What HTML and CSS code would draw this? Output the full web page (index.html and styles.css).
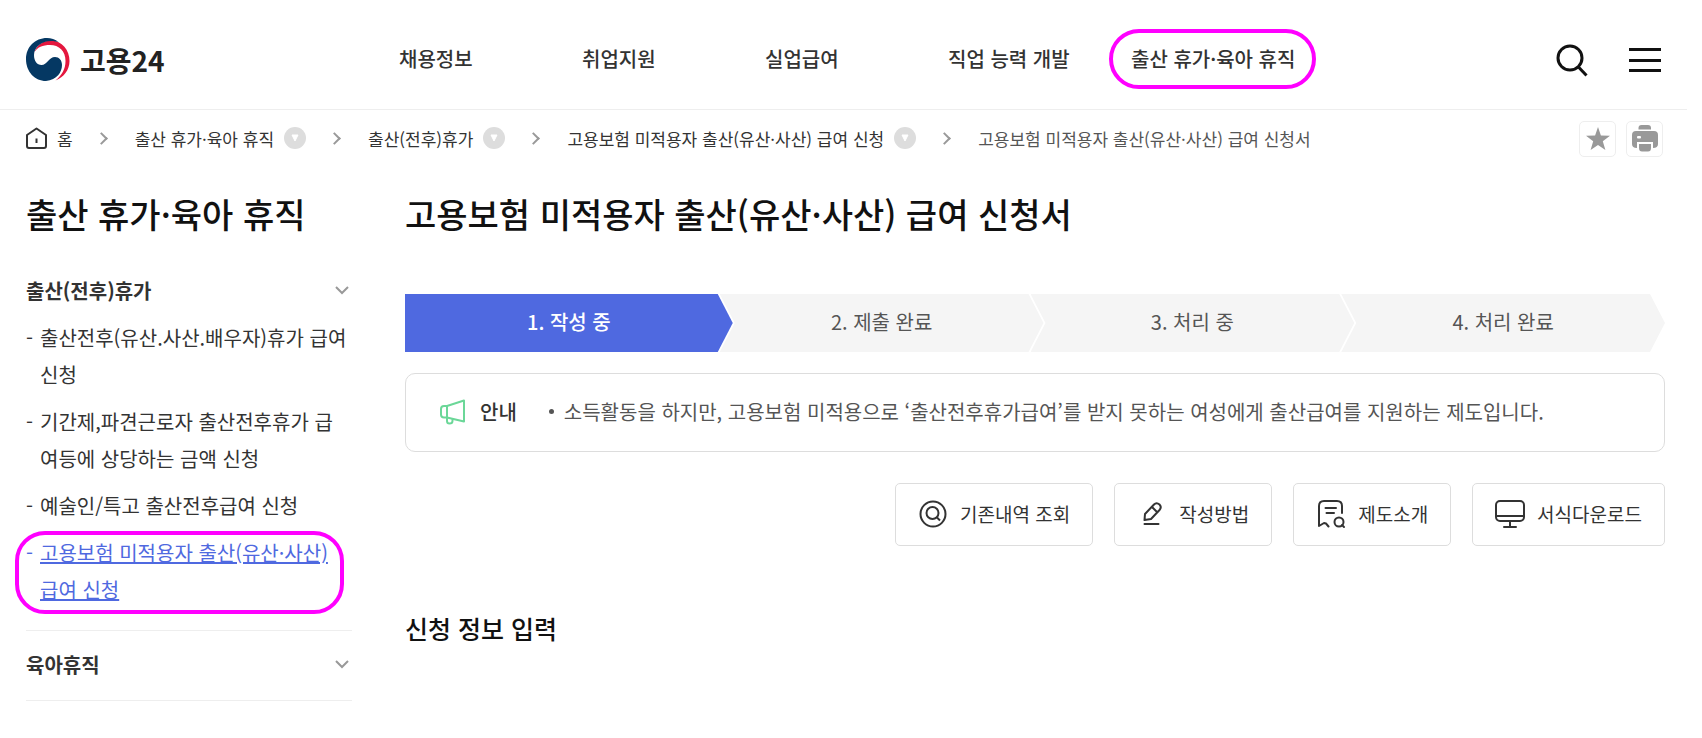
FILE: index.html
```html
<!DOCTYPE html>
<html lang="ko">

<head>
  <meta charset="UTF-8">
  <meta name="viewport" content="width=device-width, initial-scale=1.0">
  <title>고용24</title>
  <link rel="stylesheet" href="styles.css">
</head>

<body>
  <div class="page">
    <header class="header">
      <a class="logo" href="#">
        <svg class="logo_mark" viewBox="0 0 44 43">
          <path fill="#e4173e" d="M8 15C11 6 18 2.500 25 2.500C36 3 43.500 12 43.500 23C43.500 32 38 39 29.500 42.500C36 37 39.500 31 39.500 23C39.500 13 33 7 24 7C17 7 11 9 8 15Z" />
          <path fill="#053863" d="M33 4.500C29 1 25 0 21 0C9 0 0 9 0 21C0 34 9 43 20 43C31 42 36 34 36 27C36 22 33 19 29 19C23 19 21 27 15.500 27C11 27 8 23 8 17C8 9 16 3 25 3C28 3 31 3.500 33 4.500Z" />
        </svg>
        <span>고용24</span>
      </a>
      <nav class="gnb">
        <a href="#">채용정보</a>
        <a href="#">취업지원</a>
        <a href="#">실업급여</a>
        <a href="#">직업 능력 개발</a>
        <a href="#" class="marked">출산 휴가·육아 휴직</a>
      </nav>
      <div class="tools">
        <button type="button" aria-label="검색">
          <svg width="34" height="36" viewBox="0 0 34 36" fill="none" stroke="#111" stroke-width="3">
            <circle cx="15" cy="16" r="12" />
            <path d="M23 24.500L31.500 33.500" />
          </svg>
        </button>
        <button type="button" aria-label="전체메뉴">
          <svg width="32" height="26" viewBox="0 0 32 26" fill="none" stroke="#111" stroke-width="3">
            <path d="M0 2.500H32M0 13.500H32M0 23.500H32" />
          </svg>
        </button>
      </div>
    </header>

    <div class="location">
      <ol class="crumbs">
        <li>
          <a class="home" href="#">
            <svg width="21" height="22" viewBox="0 0 21 22" fill="none" stroke="#333" stroke-width="2">
              <path d="M1 8L10.500 1.500L20 8V19Q20 21 18 21H3Q1 21 1 19Z" stroke-linejoin="round" />
              <path d="M10.500 11.500V16" />
            </svg>
            홈
          </a>
        </li>
        <li>
          <a href="#">출산 휴가·육아 휴직</a>
          <button class="more" type="button" aria-label="하위 메뉴">
            <svg width="8" height="8" viewBox="0 0 8 8"><path d="M1 1H7L4 7Z" fill="#fff" stroke="#fff" stroke-linejoin="round" /></svg>
          </button>
        </li>
        <li>
          <a href="#">출산(전후)휴가</a>
          <button class="more" type="button" aria-label="하위 메뉴">
            <svg width="8" height="8" viewBox="0 0 8 8"><path d="M1 1H7L4 7Z" fill="#fff" stroke="#fff" stroke-linejoin="round" /></svg>
          </button>
        </li>
        <li>
          <a href="#">고용보험 미적용자 출산(유산·사산) 급여 신청</a>
          <button class="more" type="button" aria-label="하위 메뉴">
            <svg width="8" height="8" viewBox="0 0 8 8"><path d="M1 1H7L4 7Z" fill="#fff" stroke="#fff" stroke-linejoin="round" /></svg>
          </button>
        </li>
        <li class="current">고용보험 미적용자 출산(유산·사산) 급여 신청서</li>
      </ol>
      <div class="page_btns">
        <button type="button" aria-label="즐겨찾기">
          <svg width="26" height="26" viewBox="0 0 26 26">
            <path fill="#999" d="M13 1L15.900 9.500L25 9.800L17.800 15.300L20.400 24L13 19L5.600 24L8.200 15.300L1 9.800L10.100 9.500Z" />
          </svg>
        </button>
        <button type="button" aria-label="인쇄">
          <svg width="26" height="30" viewBox="0 0 26 30">
            <path fill="#999" d="M6.500 5.500V4Q6.500 1 9.500 1H16Q19 1 19 4V5.500Z" />
            <path fill="#999" d="M4 7H22Q26 7 26 11V20Q26 24 21 24V18H5V24Q0 24 0 20V11Q0 7 4 7Z" />
            <path fill="#999" d="M7 20H19V24Q19 27.500 16 27.500H10Q7 27.500 7 24Z" />
            <rect x="5" y="12" width="4" height="2.500" rx="1" fill="#fff" />
          </svg>
        </button>
      </div>
    </div>

    <div class="container">
      <aside class="side">
        <h2>출산 휴가·육아 휴직</h2>
        <div class="side_group">
          <button class="side_head" type="button">
            출산(전후)휴가
            <svg width="14" height="9" viewBox="0 0 14 9" fill="none" stroke="#999" stroke-width="2"><path d="M1 1L7 7L13 1" /></svg>
          </button>
          <ul>
            <li><a href="#">출산전후(유산.사산.배우자)휴가 급여 신청</a></li>
            <li><a href="#">기간제,파견근로자 출산전후휴가 급여등에 상당하는 금액 신청</a></li>
            <li><a href="#">예술인/특고 출산전후급여 신청</a></li>
            <li class="active"><a href="#">고용보험 미적용자 출산(유산·사산) 급여 신청</a></li>
          </ul>
        </div>
        <div class="side_group">
          <button class="side_head" type="button">
            육아휴직
            <svg width="14" height="9" viewBox="0 0 14 9" fill="none" stroke="#999" stroke-width="2"><path d="M1 1L7 7L13 1" /></svg>
          </button>
        </div>
      </aside>

      <main class="content">
        <h1>고용보험 미적용자 출산(유산·사산) 급여 신청서</h1>

        <ol class="steps">
          <li class="on">1. 작성 중</li>
          <li>2. 제출 완료</li>
          <li>3. 처리 중</li>
          <li>4. 처리 완료</li>
        </ol>

        <div class="notice">
          <svg width="26" height="26" viewBox="0 0 26 26" fill="none" stroke="#6bd798" stroke-width="2" stroke-linejoin="round">
            <path d="M7 7L24 1.500V22.500L7 18.500H4Q1 18.500 1 15.500V10Q1 7 4 7Z" />
            <path d="M7 7V18.500M7 19V22Q7 24.500 9.500 24.500Q12.500 24.500 12.500 22V20" />
          </svg>
          <strong>안내</strong>
          <ul>
            <li>소득활동을 하지만, 고용보험 미적용으로 ‘출산전후휴가급여’를 받지 못하는 여성에게 출산급여를 지원하는 제도입니다.</li>
          </ul>
        </div>

        <div class="btns">
          <button type="button">
            <svg width="30" height="30" viewBox="0 0 30 30" fill="none" stroke="#333" stroke-width="2">
              <circle cx="15" cy="15" r="12.500" />
              <circle cx="14.500" cy="14" r="6" />
              <path d="M18.500 18L22 21.500" />
            </svg>
            기존내역 조회
          </button>
          <button type="button">
            <svg width="30" height="30" viewBox="0 0 30 30" fill="none" stroke="#333" stroke-width="2" stroke-linejoin="round" stroke-linecap="round">
              <path d="M8 15L17 5.500Q19.500 3 22.500 5.500Q25 8 22.500 11L14 20L7.500 21Z" />
              <path d="M15 8L20 13M7.500 25H21.500" />
            </svg>
            작성방법
          </button>
          <button type="button">
            <svg width="30" height="30" viewBox="0 0 30 30" fill="none" stroke="#333" stroke-width="2" stroke-linejoin="round" stroke-linecap="round">
              <path d="M26 14V7Q26 2 21 2H8Q3 2 3 7V27L5.500 25.500L8 24L10 24.500L12.500 27.500" />
              <path d="M9.500 9H20M10.500 14H18" />
              <circle cx="23" cy="23" r="4.500" />
              <path d="M26 26L28 28" />
            </svg>
            제도소개
          </button>
          <button type="button">
            <svg width="30" height="30" viewBox="0 0 30 30" fill="none" stroke="#333" stroke-width="2" stroke-linecap="round">
              <rect x="1" y="2" width="28" height="20" rx="4" />
              <path d="M1 17H29M15 22V28M9 28H21" />
            </svg>
            서식다운로드
          </button>
        </div>

        <h3>신청 정보 입력</h3>
      </main>
    </div>
  </div>
</body>

</html>
```

FILE: styles.css
```css
*,
*::before,
*::after {
  margin: 0;
  padding: 0;
  box-sizing: border-box;
}

body {
  font-family: "Noto Sans CJK KR", sans-serif;
  font-size: 20px;
  color: #333;
  background: #fff;
}

a {
  color: inherit;
  text-decoration: none;
}

ul,
ol {
  list-style: none;
}

button {
  font: inherit;
  color: inherit;
  border: 0;
  background: none;
  cursor: pointer;
}

svg {
  flex: none;
}

.page {
  margin-right: 15px;
}

/* header */
.header {
  display: flex;
  align-items: center;
  height: 110px;
  padding: 10px 26px 0;
  border-bottom: 1px solid #eee;
}

.logo {
  display: flex;
  align-items: center;
  gap: 10px;
  width: 373px;
  font-size: 28px;
  font-weight: bold;
  color: #222;
}

.logo_mark {
  width: 44px;
  height: 43px;
}

.gnb {
  display: grid;
  grid-template-columns: repeat(5, 183px);
  padding-bottom: 2px;
  font-weight: 500;
}

.marked,
.side li.active {
  position: relative;
}

/* highlight outlines */
.marked::after,
.side li.active::after {
  content: "";
  position: absolute;
  border: 4px solid #f0f;
  border-radius: 30px;
  pointer-events: none;
}

.marked::after {
  top: -15px;
  bottom: -16px;
  left: -22px;
  width: 207px;
}

.tools {
  display: flex;
  align-items: center;
  gap: 40px;
  margin-left: auto;
}

.tools button,
.page_btns button {
  display: flex;
  align-items: center;
  justify-content: center;
}

/* location */
.location {
  display: flex;
  align-items: center;
  justify-content: space-between;
  padding: 11px 24px 0 26px;
}

.crumbs {
  display: flex;
  padding-bottom: 2px;
  font-size: 17px;
}

.crumbs li {
  display: flex;
  align-items: center;
  gap: 10px;
}

.crumbs li + li::before {
  content: "";
  width: 9px;
  height: 9px;
  margin: 0 19px 0 24px;
  border: solid #999;
  border-width: 2px 2px 0 0;
  transform: rotate(45deg);
}

.home {
  display: flex;
  align-items: center;
  gap: 10px;
}

.more {
  display: flex;
  align-items: center;
  justify-content: center;
  width: 22px;
  height: 22px;
  border-radius: 50%;
  background: #ddd;
}

.crumbs .current {
  color: #555;
}

.page_btns {
  display: flex;
  gap: 10px;
}

.page_btns button {
  width: 37px;
  height: 36px;
  border: 1px solid #eee;
  border-radius: 5px;
}

/* layout */
.container {
  display: flex;
  gap: 53px;
  padding: 31px 22px 0 26px;
}

h1,
h2 {
  font-size: 34px;
  font-weight: 500;
  line-height: 52px;
  color: #111;
}

.side {
  width: 326px;
}

.side_group {
  padding-bottom: 22px;
  border-bottom: 1px solid #eee;
}

.side h2 {
  margin-bottom: 32px;
}

.side_group + .side_group {
  padding: 15px 0 17px;
}

.side_head {
  display: flex;
  align-items: center;
  justify-content: space-between;
  width: 100%;
  height: 37px;
  padding-right: 3px;
  font-weight: bold;
}

.side ul {
  display: flex;
  flex-direction: column;
  gap: 10px;
  margin-top: 10px;
  padding-right: 4px;
}

.side li {
  display: flex;
  line-height: 37px;
}

.side li::before {
  content: "-";
  flex: none;
  width: 14px;
}

.side li.active {
  color: #4f69e0;
}

.side li.active a {
  text-decoration: underline;
}

.side li.active::after {
  top: -3px;
  bottom: -6px;
  left: -11px;
  right: 4px;
}

.content {
  flex: 1;
}

/* steps */
.steps {
  display: flex;
  margin-top: 54px;
  color: #555;
}

.steps li {
  flex: 1 1 0;
  height: 58px;
  margin-left: -13px;
  line-height: 56px;
  text-align: center;
  background: #f5f5f5;
  clip-path: polygon(0 0, calc(100% - 15px) 0, 100% 50%, calc(100% - 15px) 100%, 0 100%, 15px 50%);
}

.steps .on {
  flex-basis: 4px;
  margin-left: 0;
  font-weight: 500;
  color: #fff;
  background: #4f69e0;
  clip-path: polygon(0 0, calc(100% - 15px) 0, 100% 50%, calc(100% - 15px) 100%, 0 100%);
}

.notice {
  display: flex;
  align-items: center;
  margin-top: 21px;
  padding: 23px 34px 25px;
  border: 1px solid #ddd;
  border-radius: 10px;
}

.notice strong {
  margin: 0 32px 0 14px;
  font-weight: 500;
}

.notice li {
  display: flex;
  align-items: center;
  color: #555;
}

.notice li::before {
  content: "";
  width: 5px;
  height: 5px;
  margin-right: 10px;
  border-radius: 50%;
  background: #555;
}

.btns {
  display: flex;
  justify-content: flex-end;
  gap: 21px;
  margin-top: 31px;
}

.btns button {
  display: flex;
  align-items: center;
  gap: 12px;
  height: 63px;
  padding: 0 22px 2px;
  font-size: 19px;
  border: 1px solid #ddd;
  border-radius: 5px;
}

h3 {
  margin-top: 64px;
  font-size: 25px;
  font-weight: 500;
  color: #111;
}
```
